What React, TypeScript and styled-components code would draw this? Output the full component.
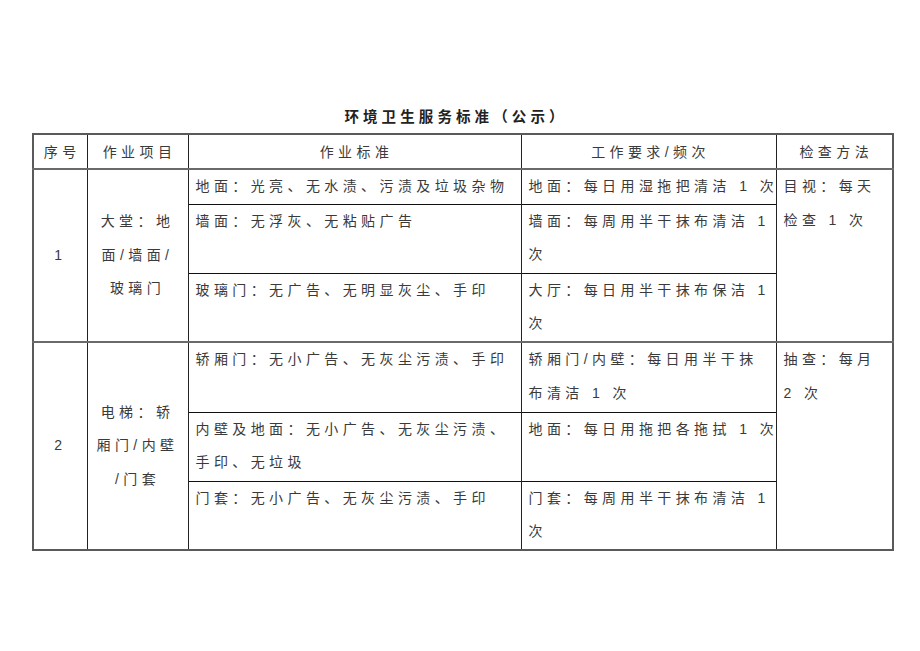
import React from "react";
import styled, { createGlobalStyle } from "styled-components";

const GlobalStyle = createGlobalStyle`
  html, body {
    margin: 0;
    padding: 0;
    background: #ffffff;
  }
  body {
    font-family: "Liberation Sans", "Noto Sans CJK SC", sans-serif;
    color: #333;
  }
`;

const Page = styled.div`
  width: 920px;
  height: 651px;
  box-sizing: border-box;
  padding: 107px 28px 0 32px;
`;

const Title = styled.h1`
  width: 860px;
  margin: 0 0 6px 0;
  padding-right: 12px;
  box-sizing: border-box;
  text-align: center;
  font-size: 14.5px;
  line-height: 20px;
  font-weight: 700;
  letter-spacing: 4.1px;
  color: #222;
`;

const Table = styled.table`
  width: 860px;
  table-layout: fixed;
  border-collapse: collapse;
  border: 2px solid #5a5a5a;
  font-size: 14px;
  letter-spacing: 4.4px;
  color: #3a3a3a;
`;

const Row = styled.tr<{ $h: number; $group?: boolean }>`
  height: ${(p) => p.$h}px;
  td,
  th {
    border-top: ${(p) => (p.$group ? "2px solid #6a6a6a" : "1px solid #111")};
  }
`;

const HeadCell = styled.th`
  font-weight: 400;
  text-align: center;
  vertical-align: middle;
  line-height: 32px;
  padding: 0 0 0 4px;
  border-left: 1px solid #222;
  white-space: nowrap;
`;

const Cell = styled.td<{ $center?: boolean }>`
  padding: 0 7px 0 7px;
  line-height: 33.5px;
  vertical-align: ${(p) => (p.$center ? "middle" : "top")};
  text-align: ${(p) => (p.$center ? "center" : "left")};
  border-left: 1px solid #222;
  white-space: nowrap;
`;

const cols = [54, 101, 333, 255, 117];

type Sub = { std: string[]; req: string[]; h: number };
type Group = { no: string; item: string[]; check: string[]; subs: Sub[] };

const groups: Group[] = [
  {
    no: "1",
    item: ["大堂：地", "面/墙面/", "玻璃门"],
    check: ["目视：每天", "检查 1 次"],
    subs: [
      { std: ["地面：光亮、无水渍、污渍及垃圾杂物"], req: ["地面：每日用湿拖把清洁 1 次"], h: 35 },
      { std: ["墙面：无浮灰、无粘贴广告"], req: ["墙面：每周用半干抹布清洁 1", "次"], h: 69 },
      { std: ["玻璃门：无广告、无明显灰尘、手印"], req: ["大厅：每日用半干抹布保洁 1", "次"], h: 69 },
    ],
  },
  {
    no: "2",
    item: ["电梯：轿", "厢门/内壁", "/门套"],
    check: ["抽查：每月", "2 次"],
    subs: [
      { std: ["轿厢门：无小广告、无灰尘污渍、手印"], req: ["轿厢门/内壁：每日用半干抹", "布清洁 1 次"], h: 70 },
      { std: ["内壁及地面：无小广告、无灰尘污渍、", "手印、无垃圾"], req: ["地面：每日用拖把各拖拭 1 次"], h: 69 },
      { std: ["门套：无小广告、无灰尘污渍、手印"], req: ["门套：每周用半干抹布清洁 1", "次"], h: 69 },
    ],
  },
];

const Lines: React.FC<{ lines: string[] }> = ({ lines }) => (
  <>
    {lines.map((l, i) => (
      <React.Fragment key={i}>
        {i > 0 && <br />}
        {l}
      </React.Fragment>
    ))}
  </>
);

export default function App() {
  return (
    <Page>
      <GlobalStyle />
      <Title>环境卫生服务标准（公示）</Title>
      <Table>
        <colgroup>
          {cols.map((w, i) => (
            <col key={i} style={{ width: w }} />
          ))}
        </colgroup>
        <tbody>
          <Row $h={35}>
            <HeadCell>序号</HeadCell>
            <HeadCell>作业项目</HeadCell>
            <HeadCell>作业标准</HeadCell>
            <HeadCell>工作要求/频次</HeadCell>
            <HeadCell>检查方法</HeadCell>
          </Row>
          {groups.map((g) =>
            g.subs.map((s, i) => (
              <Row key={g.no + i} $h={s.h} $group={i === 0}>
                {i === 0 && (
                  <>
                    <Cell $center rowSpan={g.subs.length}>
                      {g.no}
                    </Cell>
                    <Cell $center rowSpan={g.subs.length}>
                      <Lines lines={g.item} />
                    </Cell>
                  </>
                )}
                <Cell>
                  <Lines lines={s.std} />
                </Cell>
                <Cell>
                  <Lines lines={s.req} />
                </Cell>
                {i === 0 && (
                  <Cell rowSpan={g.subs.length}>
                    <Lines lines={g.check} />
                  </Cell>
                )}
              </Row>
            ))
          )}
        </tbody>
      </Table>
    </Page>
  );
}
